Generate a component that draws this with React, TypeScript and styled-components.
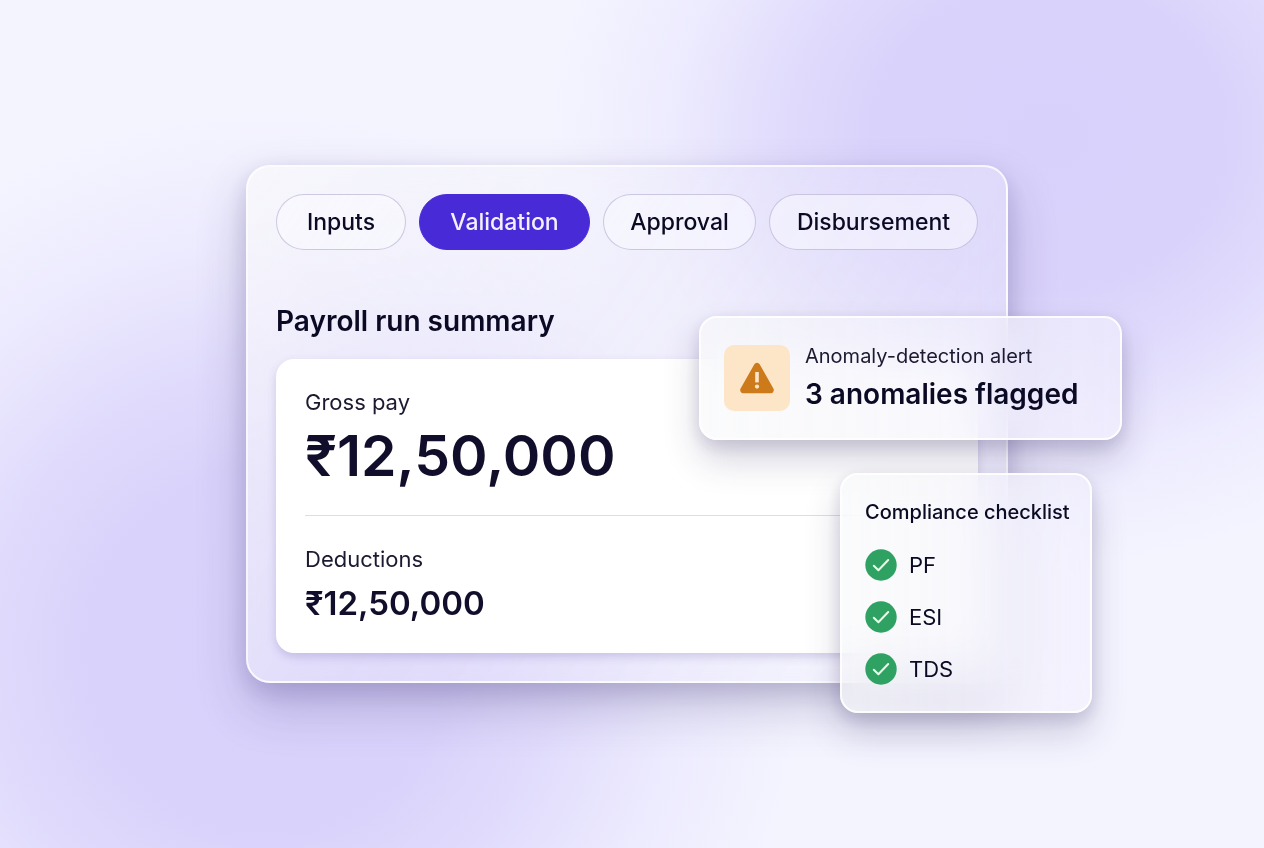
import React, { useState } from "react";
import styled, { createGlobalStyle } from "styled-components";

const GlobalStyle = createGlobalStyle`
  * {
    box-sizing: border-box;
  }
  body {
    margin: 0;
    font-family: Inter, "Liberation Sans", sans-serif;
    color: #0b0a24;
  }
  h1, h2, p, dl, dt, dd, ul {
    margin: 0;
    padding: 0;
  }
`;

const Page = styled.main`
  min-height: 100vh;
  display: flex;
  align-items: center;
  justify-content: center;
  padding: 40px 124px 40px 114px;
  overflow: hidden;
  background:
    radial-gradient(ellipse 500px 430px at 83% 16%, rgba(216, 209, 251, 1) 0%, rgba(216, 209, 251, 0.95) 36%, rgba(216, 209, 251, 0.62) 58%, rgba(216, 209, 251, 0.24) 76%, rgba(216, 209, 251, 0) 100%),
    radial-gradient(ellipse 540px 540px at 21% 77%, rgba(216, 209, 251, 1) 0%, rgba(216, 209, 251, 0.95) 34%, rgba(216, 209, 251, 0.65) 56%, rgba(216, 209, 251, 0.27) 76%, rgba(216, 209, 251, 0) 100%),
    #f4f4ff;
`;

const Stage = styled.div`
  position: relative;
  width: 100%;
  max-width: 762px;
`;

const Panel = styled.section`
  padding: 27px 28px 28px;
  border: 2px solid rgba(255, 255, 255, 0.75);
  border-radius: 24px;
  background: linear-gradient(125deg, rgba(248, 248, 251, 0.8) 0%, rgba(240, 239, 250, 0.35) 40%, rgba(240, 239, 250, 0.25) 100%);
  box-shadow: 0 24px 50px rgba(56, 44, 110, 0.24), 0 8px 22px rgba(56, 44, 110, 0.16);
  backdrop-filter: blur(20px);
`;

const Steps = styled.nav`
  display: grid;
  grid-template-columns: 130fr 171fr 153fr 209fr;
  gap: 13px;
`;

const Step = styled.button<{ $active: boolean }>`
  height: 56px;
  padding: 0;
  border: 1px solid ${(p) => (p.$active ? "#482ad6" : "rgba(140, 130, 180, 0.4)")};
  border-radius: 28px;
  background: ${(p) => (p.$active ? "#482ad6" : "rgba(250, 250, 255, 0.55)")};
  color: ${(p) => (p.$active ? "#f3f0ff" : "#0b0a24")};
  font: 500 23px/28px Inter, "Liberation Sans", sans-serif;
  cursor: pointer;
`;

const Title = styled.h1`
  margin: 53px 0 20px;
  font-size: 28px;
  line-height: 36px;
  font-weight: 600;
`;

const Summary = styled.dl`
  padding: 27px 29px 22px;
  border-radius: 18px;
  background: #fff;
  box-shadow: 0 4px 10px rgba(72, 56, 140, 0.2);
`;

const Entry = styled.div`
  & + & {
    margin-top: 21px;
    padding-top: 27px;
    border-top: 1px solid #dddde4;
  }
`;

const Label = styled.dt`
  font-size: 22px;
  line-height: 32px;
  color: #1b1a30;
`;

const Amount = styled.dd<{ $large?: boolean }>`
  font-size: ${(p) => (p.$large ? "57px" : "33px")};
  line-height: ${(p) => (p.$large ? "76px" : "56px")};
  font-weight: 600;
  color: #110e2c;
`;

const Glass = styled.section`
  position: absolute;
  border: 2px solid rgba(255, 255, 255, 0.85);
  border-radius: 18px;
  background: linear-gradient(90deg, rgba(248, 249, 250, 0.65), rgba(242, 240, 253, 0.6));
  box-shadow: 0 20px 36px rgba(50, 40, 96, 0.2), 0 6px 16px rgba(50, 40, 96, 0.15);
  backdrop-filter: blur(20px);
`;

const Alert = styled(Glass)`
  top: 151px;
  right: -114px;
  display: flex;
  align-items: center;
  gap: 15px;
  width: 423px;
  height: 124px;
  padding: 0 23px;
`;

const AlertBadge = styled.div`
  display: grid;
  place-items: center;
  width: 66px;
  height: 66px;
  border-radius: 10px;
  background: #fde6c8;
`;

const AlertLabel = styled.p`
  font-size: 20px;
  line-height: 32px;
  color: #1b1a30;
`;

const AlertText = styled.p`
  font-size: 28px;
  line-height: 44px;
  font-weight: 600;
`;

const Checklist = styled(Glass)`
  top: 308px;
  right: -84px;
  width: 252px;
  height: 240px;
  padding: 23px;
`;

const ChecklistTitle = styled.h2`
  font-size: 20px;
  line-height: 28px;
  font-weight: 500;
  white-space: nowrap;
`;

const Checks = styled.ul`
  display: grid;
  gap: 20px;
  margin-top: 23px;
  list-style: none;
`;

const Check = styled.li`
  display: flex;
  align-items: center;
  gap: 12px;
  font-size: 22px;
  line-height: 32px;
`;

const WarningIcon = () => (
  <svg width="36" height="32" viewBox="0 0 36 32" aria-hidden="true">
    <path
      d="M15.2 2.4a3.2 3.2 0 0 1 5.6 0l13.6 24.2a3.1 3.1 0 0 1-2.7 4.6H4.3a3.1 3.1 0 0 1-2.7-4.6z"
      fill="#cd7a1b"
    />
    <path d="M16.2 10h3.6v10.4h-3.6z" fill="#fde6c8" />
    <circle cx="18" cy="24.6" r="2.1" fill="#fde6c8" />
  </svg>
);

const CheckIcon = () => (
  <svg width="32" height="32" viewBox="0 0 32 32" aria-hidden="true">
    <circle cx="16" cy="16" r="15.7" fill="#2fa263" />
    <path
      d="M8.8 16.8l4.6 4.4L23.2 11"
      fill="none"
      stroke="#e9fbe9"
      strokeWidth="2"
      strokeLinecap="round"
      strokeLinejoin="round"
    />
  </svg>
);

const STEPS = ["Inputs", "Validation", "Approval", "Disbursement"];
const CHECKS = ["PF", "ESI", "TDS"];

export default function App() {
  const [step, setStep] = useState("Validation");

  return (
    <>
      <GlobalStyle />
      <Page>
        <Stage>
          <Panel>
            <Steps>
              {STEPS.map((name) => (
                <Step key={name} type="button" $active={name === step} onClick={() => setStep(name)}>
                  {name}
                </Step>
              ))}
            </Steps>
            <Title>Payroll run summary</Title>
            <Summary>
              <Entry>
                <Label>Gross pay</Label>
                <Amount $large>₹12,50,000</Amount>
              </Entry>
              <Entry>
                <Label>Deductions</Label>
                <Amount>₹12,50,000</Amount>
              </Entry>
            </Summary>
          </Panel>
          <Alert>
            <AlertBadge>
              <WarningIcon />
            </AlertBadge>
            <div>
              <AlertLabel>Anomaly-detection alert</AlertLabel>
              <AlertText>3 anomalies flagged</AlertText>
            </div>
          </Alert>
          <Checklist>
            <ChecklistTitle>Compliance checklist</ChecklistTitle>
            <Checks>
              {CHECKS.map((name) => (
                <Check key={name}>
                  <CheckIcon />
                  {name}
                </Check>
              ))}
            </Checks>
          </Checklist>
        </Stage>
      </Page>
    </>
  );
}
